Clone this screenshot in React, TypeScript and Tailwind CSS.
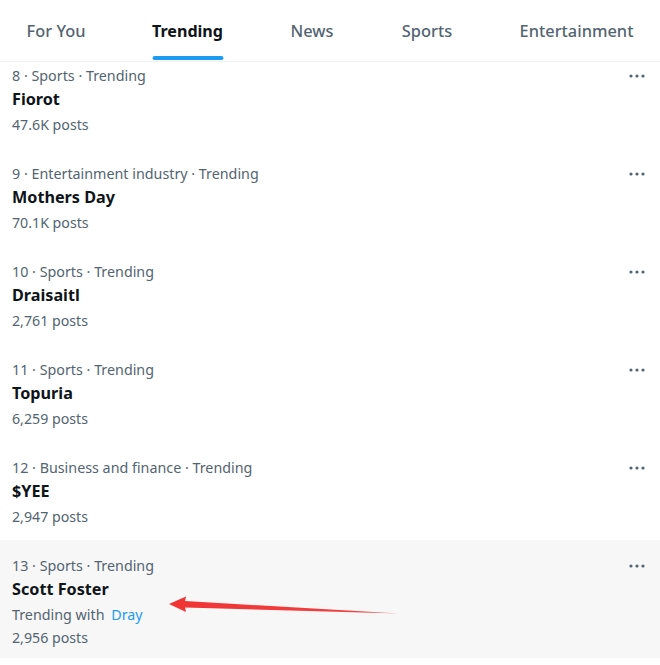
import React from "react";

type Trend = {
  rank: number;
  category: string;
  name: string;
  posts: string;
  with?: string;
  highlight?: boolean;
};

const trends: Trend[] = [
  { rank: 8, category: "Sports", name: "Fiorot", posts: "47.6K posts" },
  { rank: 9, category: "Entertainment industry", name: "Mothers Day", posts: "70.1K posts" },
  { rank: 10, category: "Sports", name: "Draisaitl", posts: "2,761 posts" },
  { rank: 11, category: "Sports", name: "Topuria", posts: "6,259 posts" },
  { rank: 12, category: "Business and finance", name: "$YEE", posts: "2,947 posts" },
  { rank: 13, category: "Sports", name: "Scott Foster", posts: "2,956 posts", with: "Dray", highlight: true },
];

const tabs = [
  { label: "For You", w: "w-[112px]" },
  { label: "Trending", w: "w-[151px]", active: true },
  { label: "News", w: "w-[98px]" },
  { label: "Sports", w: "w-[132px]" },
  { label: "Entertainment", w: "w-[167px]" },
];

function Dots() {
  return (
    <svg width="16" height="4" viewBox="0 0 16 4" className="block">
      <circle cx="2" cy="2" r="1.6" fill="#536471" />
      <circle cx="8" cy="2" r="1.6" fill="#536471" />
      <circle cx="14" cy="2" r="1.6" fill="#536471" />
    </svg>
  );
}

function Row({ t, first }: { t: Trend; first?: boolean }) {
  return (
    <div
      className={`relative flex px-3 ${first ? "pt-[4px]" : "pt-[16px]"} ${
        t.with ? "pb-[10px]" : "pb-[13px]"
      } ${t.highlight ? "bg-[#f7f7f7]" : "bg-white"}`}
    >
      <div className="flex flex-col">
        <div className="text-[14.3px] leading-[20px] text-[#536471]">
          {t.rank} · {t.category} · Trending
        </div>
        <div className="mt-[1px] text-[16.2px] leading-[24px] font-bold text-[#0f1419]">{t.name}</div>
        {t.with && (
          <div className="mt-[4px] text-[14.3px] leading-[20px] text-[#536471]">
            Trending with <span className="ml-[3px] text-[#1d9bf0]">{t.with}</span>
          </div>
        )}
        <div className={`${t.with ? "mt-[3px]" : "mt-[4px]"} text-[14.2px] leading-[20px] text-[#536471]`}>
          {t.posts}
        </div>
      </div>
      <div className="ml-auto flex h-[20px] items-center pr-[3px]">
        <Dots />
      </div>
    </div>
  );
}

export default function App() {
  return (
    <div
      className="relative h-[665px] w-[660px] overflow-hidden bg-white"
      style={{ fontFamily: '"Noto Sans", "Open Sans", sans-serif' }}
    >
      <div className="flex h-[62px] border-b border-[#eff3f4]">
        {tabs.map((tab) => (
          <div key={tab.label} className={`${tab.w} relative flex items-center justify-center pt-[2px]`}>
            <span
              className={`${
                tab.active ? "text-[16.1px] font-bold text-[#0f1419]" : "text-[16.4px] font-medium text-[#536471]"
              }`}
            >
              {tab.label}
            </span>
            {tab.active && (
              <div className="absolute bottom-[1px] left-1/2 h-[4px] w-[71px] -translate-x-1/2 rounded-full bg-[#1d9bf0]" />
            )}
          </div>
        ))}
      </div>
      <div className="flex flex-col">
        {trends.map((t, i) => (
          <Row key={t.rank} t={t} first={i === 0} />
        ))}
      </div>
      <svg
        className="pointer-events-none absolute left-0 top-0"
        width="660"
        height="665"
        viewBox="0 0 660 665"
      >
        <defs>
          <linearGradient id="arrowGrad" x1="169" y1="0" x2="400" y2="0" gradientUnits="userSpaceOnUse">
            <stop offset="0" stopColor="#f03434" />
            <stop offset="0.85" stopColor="#f24040" />
            <stop offset="1" stopColor="#f7a0a0" />
          </linearGradient>
        </defs>
        <polygon
          points="169,604 186,596.5 185,601 399,613.5 185,607.5 186,612"
          fill="url(#arrowGrad)"
        />
      </svg>
    </div>
  );
}
